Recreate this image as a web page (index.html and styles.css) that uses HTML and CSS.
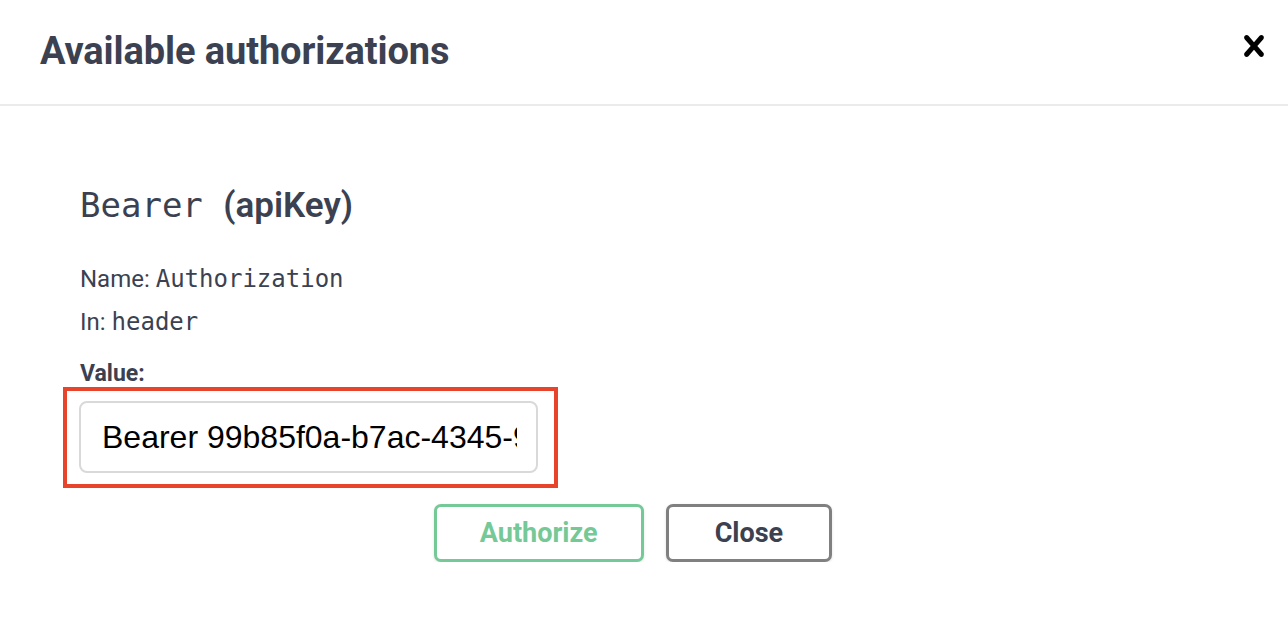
FILE: index.html
```html
<!DOCTYPE html>
<html lang="en">
<head>
<meta charset="utf-8">
<title>Available authorizations</title>
<link rel="stylesheet" href="styles.css">
</head>
<body>
<div class="modal">
  <header class="modal-head">
    <h3 class="modal-title">Available authorizations</h3>
    <button class="close-x" aria-label="Close">
      <svg viewBox="0 0 20 20" width="42" height="42"><path d="M14.348 14.849c-.469.469-1.229.469-1.697 0L10 11.819l-2.651 3.029c-.469.469-1.229.469-1.697 0-.469-.469-.469-1.229 0-1.697l2.758-3.15-2.759-3.152c-.469-.469-.469-1.228 0-1.697.469-.469 1.228-.469 1.697 0L10 8.183l2.651-3.031c.469-.469 1.228-.469 1.697 0 .469.469.469 1.229 0 1.697l-2.758 3.152 2.758 3.15c.469.469.469 1.229 0 1.698z"/></svg>
    </button>
  </header>
  <section class="modal-body">
    <h4 class="scheme"><code>Bearer</code> <span class="scheme-type">(apiKey)</span></h4>
    <p class="meta first">Name: <code>Authorization</code></p>
    <p class="meta">In: <code>header</code></p>
    <label class="value-label" for="token">Value:</label>
    <div class="highlight">
      <input id="token" class="token-input" type="text" value="Bearer 99b85f0a-b7ac-4345-9f2d-1c3e5a7b9d0f">
    </div>
  </section>
  <div class="btn-row">
    <button class="btn btn-auth">Authorize</button>
    <button class="btn btn-close">Close</button>
  </div>
</div>
</body>
</html>
```
FILE: styles.css
```css
html, body {
  margin: 0;
  padding: 0;
  background: #ffffff;
}

body {
  font-family: Roboto, "Liberation Sans", sans-serif;
  color: #3b4151;
}

.modal {
  width: 1288px;
}

.modal-head {
  display: flex;
  align-items: flex-start;
  justify-content: space-between;
  height: 104px;
  padding: 0 13px 0 40px;
  border-bottom: 2px solid #ebebeb;
}

.modal-title {
  margin: 0;
  font-size: 38px;
  line-height: 102px;
  font-weight: 700;
  letter-spacing: -0.1px;
  color: #3b4151;
}

.close-x {
  border: 0;
  background: none;
  padding: 0;
  width: 42px;
  height: 42px;
  margin-top: 25px;
  display: flex;
}

.close-x svg {
  fill: #000000;
}

.modal-body {
  padding: 79px 0 0 80px;
}

.scheme {
  margin: 0;
  font-size: 34px;
  line-height: 40px;
  font-weight: 400;
  font-family: "DejaVu Sans Mono", monospace;
  color: #3b4151;
}

.scheme code {
  font-family: "DejaVu Sans Mono", monospace;
}

.scheme-type {
  font-family: Roboto, "Liberation Sans", sans-serif;
  font-size: 35px;
  font-weight: 600;
}

.meta {
  margin: 0;
  font-size: 24px;
  line-height: 43px;
  color: #3b4151;
}

.meta.first {
  margin-top: 32px;
}

.meta code {
  font-family: "DejaVu Sans Mono", monospace;
  font-size: 24px;
}

.value-label {
  display: block;
  margin-top: 17px;
  font-size: 23px;
  line-height: 25px;
  font-weight: 700;
  color: #3b4151;
}

.highlight {
  display: inline-block;
  margin: 1px 0 0 -17px;
  padding: 10px 16px 11px 12px;
  border: 4px solid #e8432b;
}

.token-input {
  display: block;
  box-sizing: border-box;
  width: 459px;
  height: 72px;
  padding: 0 19px 0 21px;
  border: 2px solid #d9d9d9;
  border-radius: 8px;
  font-family: "Liberation Sans", Arial, sans-serif;
  font-size: 32px;
  color: #000000;
  background: #ffffff;
  outline: none;
}

.btn-row {
  display: flex;
  justify-content: center;
  gap: 22px;
  margin-top: 16px;
}

.btn {
  box-sizing: border-box;
  height: 58px;
  padding: 0 46px;
  border: 3px solid #808080;
  border-radius: 7px;
  background: #ffffff;
  font-family: Roboto, "Liberation Sans", sans-serif;
  font-size: 27px;
  font-weight: 700;
  color: #3b4151;
  box-shadow: 0 1px 3px rgba(0, 0, 0, 0.12);
}

.btn-auth {
  border-color: #74c997;
  color: #74c997;
  padding: 0 43px;
}

.btn-close {
  margin-right: 22px;
}
```
